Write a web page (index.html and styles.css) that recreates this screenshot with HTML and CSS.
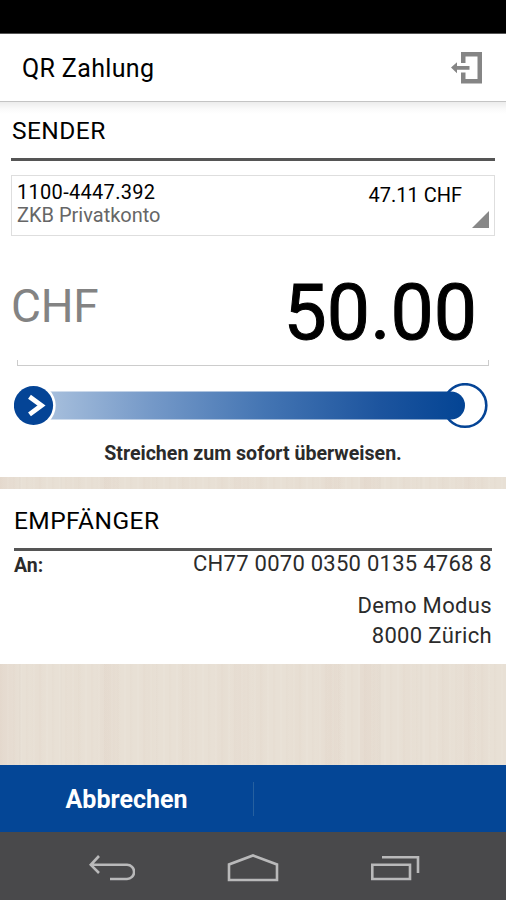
FILE: index.html
```html
<!DOCTYPE html>
<html lang="de">
<head>
  <meta charset="UTF-8">
  <meta name="viewport" content="width=device-width, initial-scale=1.0">
  <title>QR Zahlung</title>
  <link rel="stylesheet" href="styles.css">
</head>
<body>

<div class="statusbar"></div>

<header class="topbar">
  <h1>QR Zahlung</h1>
  <svg class="logout" width="32" height="34" viewBox="0 0 32 34">
    <path d="M10 12V1H31V32.5H10V21.5H14.5V28H26.5V5.5H14.5V12Z" fill="#858585"/>
    <path d="M0 16.5L6 11.2V15H18.5V18.7H6V22.2Z" fill="#858585"/>
  </svg>
</header>

<main>
  <section class="card sender">
    <h2>SENDER</h2>
    <div class="account">
      <div class="account-info">
        <div class="number">1100-4447.392</div>
        <div class="name">ZKB Privatkonto</div>
      </div>
      <div class="balance">47.11 CHF</div>
      <svg class="corner" width="17" height="17" viewBox="0 0 17 17"><path d="M17 0V17H0Z" fill="#888"/></svg>
    </div>
    <div class="amount">
      <span class="currency">CHF</span>
      <span class="value">50.00</span>
    </div>
    <div class="underline"></div>
    <svg class="slider" width="476" height="46" viewBox="0 0 476 46">
      <defs>
        <linearGradient id="track" x1="0" x2="1" y1="0" y2="0">
          <stop offset="0" stop-color="#a8c0dd"/>
          <stop offset="0.25" stop-color="#7599c8"/>
          <stop offset="0.52" stop-color="#4475b3"/>
          <stop offset="0.8" stop-color="#1c549e"/>
          <stop offset="1" stop-color="#034494"/>
        </linearGradient>
      </defs>
      <circle cx="451" cy="22.5" r="21.3" fill="#fff" stroke="#044496" stroke-width="2.6"/>
      <path d="M32 8.5H437A14 14 0 0 1 437 36.5H32Z" fill="url(#track)"/>
      <circle cx="19.5" cy="22.5" r="22.2" fill="#fff"/>
      <circle cx="19.5" cy="22.5" r="19.6" fill="#044496"/>
      <path d="M15.5 13.8L27.5 22.5L15.5 31.4" fill="none" stroke="#fff" stroke-width="4.8"/>
    </svg>
    <p class="hint">Streichen zum sofort überweisen.</p>
  </section>

  <section class="card receiver">
    <h2>EMPFÄNGER</h2>
    <div class="to">
      <span class="label">An:</span>
      <span class="iban">CH77 0070 0350 0135 4768 8</span>
    </div>
    <address>Demo Modus<br>8000 Zürich</address>
  </section>
</main>

<div class="actions">
  <button class="cancel">Abbrechen</button>
</div>

<nav class="navbar">
  <svg width="48" height="28" viewBox="0 0 48 28" fill="none" stroke="#b9b9ba" stroke-width="2.6">
    <path d="M12 2L3.8 10.8L12 19M3.8 10.8H40A7.1 7.1 0 0 1 40 25H23"/>
  </svg>
  <svg width="52" height="30" viewBox="0 0 52 30" fill="none" stroke="#b9b9ba" stroke-width="2.6">
    <path d="M2 27V11.5L26 2.5L50 11.5V27Z"/>
  </svg>
  <svg width="50" height="28" viewBox="0 0 50 28" fill="none" stroke="#b9b9ba" stroke-width="2.6">
    <path d="M2.3 10.7H40V25H2.3ZM12 3.3H48V19"/>
  </svg>
</nav>

</body>
</html>
```

FILE: styles.css
```css
* {
  box-sizing: border-box;
}
body {
  margin: 0;
  height: 900px;
  display: flex;
  flex-direction: column;
  overflow: hidden;
  font-family: Roboto, sans-serif;
  color: #000;
}
h1, h2, p {
  margin: 0;
  font-weight: normal;
}
svg {
  display: block;
}
.statusbar {
  height: 34px;
  background: #000;
  border-bottom: 1px solid #555;
}
.topbar {
  height: 68px;
  display: flex;
  align-items: center;
  justify-content: space-between;
  padding: 0 23px 0 22px;
  background: #fff;
  border-bottom: 1px solid #c4c4c4;
}
.topbar h1 {
  font-size: 25px;
  line-height: 30px;
  letter-spacing: 0.35px;
  padding-top: 2px;
}
/* light wood boards behind the cards */
main {
  flex: 1;
  background:
    repeating-linear-gradient(90deg, rgba(210, 188, 172, 0.06) 0 1px, transparent 3px 7px, rgba(255, 255, 255, 0.1) 8px, transparent 9px 13px),
    repeating-linear-gradient(90deg, rgba(214, 192, 176, 0.06) 0 3px, transparent 10px 29px, rgba(214, 192, 176, 0.05) 34px 37px),
    linear-gradient(90deg, #e6dcd1 0 10px, #e7dfd4 19px, #e2d9ce 20px, #e8e0d5 21px 60px, #e4dcd1 61px, #e8e0d5 62px 95px, #e6dcd1 107px, #e8e0d5 120px 230px, #e6dcd1 240px, #e8e0d5 253px 315px, #e6dcd1 330px, #e8e0d5 345px);
  background-size: auto, auto, 360px 100%;
}
.card {
  background: #fff;
}
.sender {
  height: 375px;
  padding: 13px 11px 0;
  background: linear-gradient(#ececec, #fafafa 7px, #fff 12px);
}
h2 {
  font-size: 24.5px;
  line-height: 32px;
  letter-spacing: 0.45px;
  border-bottom: 3px solid #555;
}
.sender h2 {
  height: 46px;
  padding-left: 1px;
}
.account {
  position: relative;
  display: flex;
  justify-content: space-between;
  height: 61px;
  margin-top: 14px;
  padding: 4px 32px 0 5px;
  border: 1px solid #dedede;
  font-size: 20px;
  line-height: 24px;
  background: #fff;
}
.number {
  letter-spacing: 0.3px;
}
.name {
  color: #666;
  margin-top: -1px;
}
.balance {
  padding-top: 3px;
}
.corner {
  position: absolute;
  right: 5px;
  bottom: 7px;
}
.amount {
  display: flex;
  justify-content: space-between;
  align-items: center;
  height: 124px;
  padding: 30px 18px 0 0;
}
.currency {
  font-size: 46px;
  line-height: 54px;
  letter-spacing: -0.3px;
  color: #838383;
  margin-top: -15px;
}
.value {
  font-size: 77px;
  line-height: 90px;
  -webkit-text-stroke: 1px #000;
}
.underline {
  height: 6px;
  margin: 0 6px;
  border: 1px solid #ccc;
  border-top: none;
}
.slider {
  margin: 17px 0 0 3px;
}
.hint {
  margin-top: 13px;
  line-height: 24px;
  font-size: 19.6px;
  font-weight: bold;
  text-align: center;
  color: #2b2b2b;
}
.receiver {
  height: 175px;
  margin-top: 12px;
  padding: 16px 14px 0;
  color: #2b2b2b;
}
.receiver h2 {
  height: 46px;
  color: #000;
}
.to {
  display: flex;
  justify-content: space-between;
  line-height: 26px;
}
.label {
  font-size: 19.5px;
  font-weight: bold;
  padding-top: 2px;
}
.iban {
  font-size: 22px;
  letter-spacing: 0.26px;
}
address {
  margin-top: 12px;
  font-style: normal;
  font-size: 22px;
  line-height: 30px;
  letter-spacing: 0.35px;
  text-align: right;
}
.actions {
  height: 67px;
  display: flex;
  align-items: center;
  background: #044696;
}
.cancel {
  width: 254px;
  height: 34px;
  padding: 2px 0 0;
  border: none;
  border-right: 1px solid #26609f;
  background: none;
  color: #fff;
  font: bold 25px/32px Roboto, sans-serif;
}
.navbar {
  height: 68px;
  display: flex;
  justify-content: space-between;
  align-items: center;
  padding: 4px 86px 0 87px;
  background: #49494b;
}
```
